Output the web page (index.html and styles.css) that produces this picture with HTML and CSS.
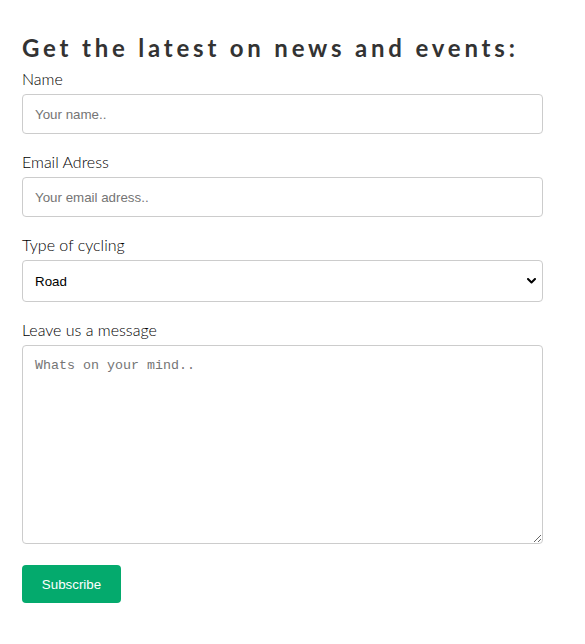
FILE: index.html
```html
<!DOCTYPE html>
<html lang="en">
<head>
<meta charset="utf-8">
<title>Newsletter</title>
<link rel="stylesheet" href="styles.css">
</head>
<body>
<div class="wrap">
  <h3 class="title">Get the latest on news and events:</h3>
  <form class="form">
    <label class="label" for="name">Name</label>
    <input class="field" id="name" type="text" placeholder="Your name..">

    <label class="label" for="email">Email Adress</label>
    <input class="field" id="email" type="text" placeholder="Your email adress..">

    <label class="label" for="type">Type of cycling</label>
    <div class="select-wrap">
      <select class="field select" id="type">
        <option>Road</option>
        <option>Mountain</option>
        <option>Gravel</option>
      </select>
      <svg class="chevron" width="9" height="6" viewBox="0 0 9 6" aria-hidden="true">
        <path d="M1 1 L4.5 4.5 L8 1" fill="none" stroke="#000" stroke-width="2" stroke-linecap="round" stroke-linejoin="round"/>
      </svg>
    </div>

    <label class="label" for="msg">Leave us a message</label>
    <textarea class="field area" id="msg" placeholder="Whats on your mind.."></textarea>

    <div class="actions">
      <button class="btn" type="button">Subscribe</button>
    </div>
  </form>
</div>
</body>
</html>
```
FILE: styles.css
```css
html, body {
  margin: 0;
  padding: 0;
  background: #fff;
}

body {
  font-family: Lato, "Open Sans", sans-serif;
}

.wrap {
  width: 521px;
  padding: 33px 0 0 22px;
}

.title {
  margin: 0;
  font-size: 24px;
  line-height: 29px;
  font-weight: 700;
  letter-spacing: 3.8px;
  color: #333;
  white-space: nowrap;
}

.form {
  display: flex;
  flex-direction: column;
  margin-top: 7px;
}

.label {
  display: block;
  font-size: 16px;
  line-height: 19px;
  font-weight: 300;
  color: #000;
  margin-bottom: 6px;
}

.field {
  box-sizing: border-box;
  width: 100%;
  height: 40px;
  margin: 0 0 18px 0;
  padding: 0 12px;
  border: 1px solid #ccc;
  border-radius: 4px;
  background: #fff;
  font-family: "Liberation Sans", Arial, sans-serif;
  font-size: 13.333px;
  color: #000;
  outline: none;
}

.field::placeholder {
  color: #757575;
}

.select-wrap {
  position: relative;
}

.select {
  height: 42px;
  -webkit-appearance: none;
  appearance: none;
  display: block;
}

.chevron {
  position: absolute;
  right: 7px;
  top: 18px;
}

.area {
  height: 199px;
  padding: 12px;
  margin-bottom: 21px;
  font-family: "Liberation Mono", "Courier New", monospace;
  font-size: 13.333px;
  line-height: 16px;
  resize: vertical;
  display: block;
}

.actions {
  display: flex;
}

.btn {
  box-sizing: border-box;
  height: 38px;
  width: 99px;
  padding: 0;
  border: none;
  border-radius: 4px;
  background: #04aa6d;
  color: #fff;
  font-family: "Liberation Sans", Arial, sans-serif;
  font-size: 13.333px;
  cursor: pointer;
}
```
